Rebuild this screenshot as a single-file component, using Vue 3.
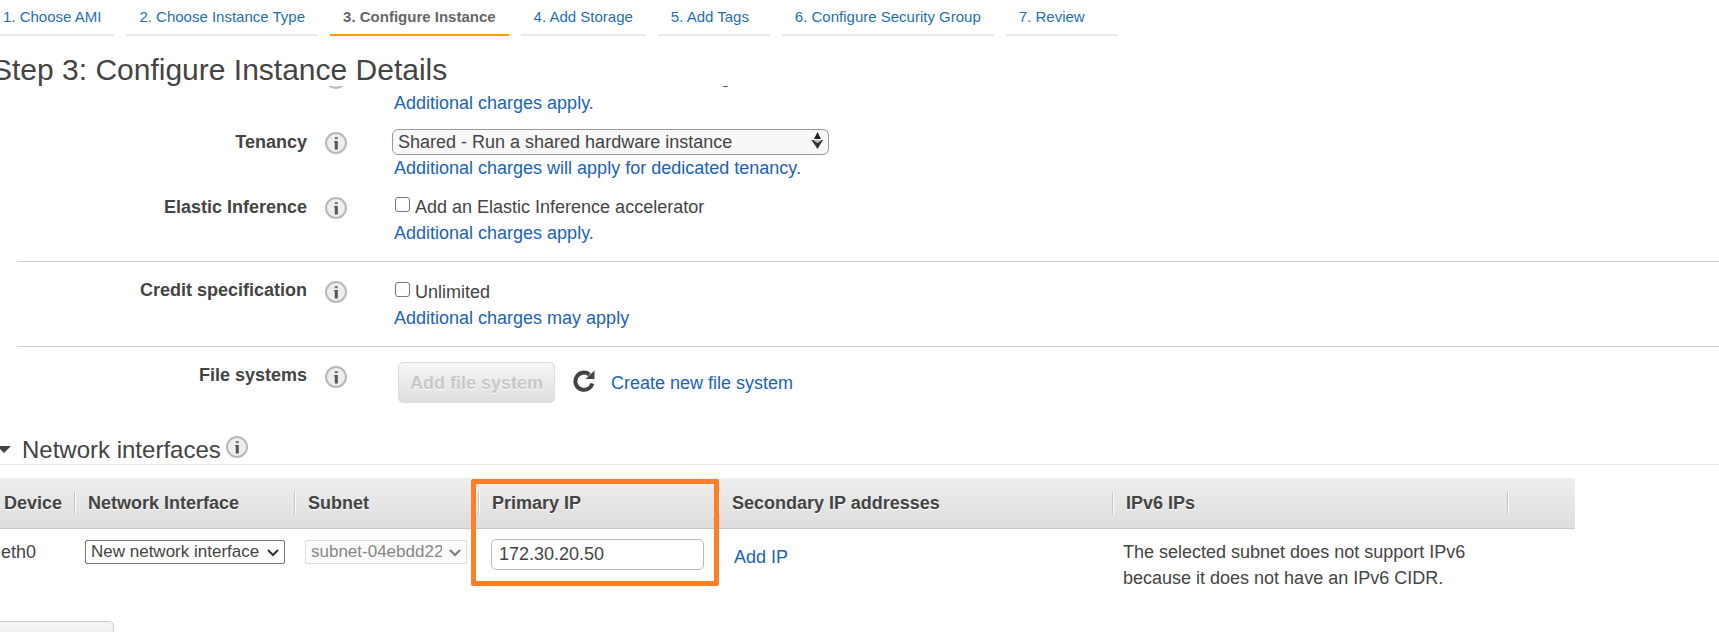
<script setup>
import { ref, h } from 'vue'

const steps = [
  '1. Choose AMI',
  '2. Choose Instance Type',
  '3. Configure Instance',
  '4. Add Storage',
  '5. Add Tags',
  '6. Configure Security Group',
  '7. Review'
]
const current = 2

const monitoring = ref(false)
const elastic = ref(false)
const unlimited = ref(false)
const primaryIp = ref('172.30.20.50')

const InfoIcon = () =>
  h('svg', { width: 22, height: 22, viewBox: '0 0 22 22', 'aria-hidden': 'true' }, [
    h('circle', { cx: 11, cy: 11, r: 10, fill: '#eeeeee', stroke: '#b8b8b8', 'stroke-width': 2 }),
    h('rect', { x: 9.8, y: 5, width: 3, height: 2.2, fill: '#777' }),
    h('path', { d: 'M9.200 9h3.600v8.500H9.800v-7H9.200z', fill: '#555' })
  ])
</script>

<template>
  <div class="page">
    <nav class="steps" aria-label="Launch steps">
      <a
        v-for="(step, i) in steps"
        :key="step"
        href="#"
        class="step"
        :class="{ active: i === current }"
      >{{ step }}</a>
    </nav>
    <h1 class="title">Step 3: Configure Instance Details</h1>

    <div class="details">
      <section class="group first">
        <div class="row">
          <span class="label"></span>
          <InfoIcon class="info" />
          <div class="field">
            <div class="check">
              <input id="monitoring" v-model="monitoring" type="checkbox">
              <label for="monitoring">Enable CloudWatch detailed monitoring</label>
            </div>
            <a href="#">Additional charges apply.</a>
          </div>
        </div>
        <div class="row">
          <label class="label" for="tenancy">Tenancy</label>
          <InfoIcon class="info" />
          <div class="field">
            <div class="picker tenancy">
              <select id="tenancy">
                <option>Shared - Run a shared hardware instance</option>
              </select>
              <svg width="12" height="18" viewBox="0 0 12 18" aria-hidden="true">
                <path d="M6.500 0L10 7H3z" fill="#222" />
                <path d="M0.500 8h2l4 3L10.500 8h1.500L6.500 17z" fill="#333" />
                <path d="M3 8h7L6.500 11z" fill="#bbb" />
              </svg>
            </div>
            <a href="#">Additional charges will apply for dedicated tenancy.</a>
          </div>
        </div>
        <div class="row">
          <label class="label" for="elastic">Elastic Inference</label>
          <InfoIcon class="info" />
          <div class="field">
            <div class="check">
              <input id="elastic" v-model="elastic" type="checkbox">
              <label for="elastic">Add an Elastic Inference accelerator</label>
            </div>
            <a href="#">Additional charges apply.</a>
          </div>
        </div>
      </section>

      <section class="group">
        <div class="row">
          <label class="label" for="unlimited">Credit specification</label>
          <InfoIcon class="info" />
          <div class="field lowered">
            <div class="check">
              <input id="unlimited" v-model="unlimited" type="checkbox">
              <label for="unlimited">Unlimited</label>
            </div>
            <a href="#">Additional charges may apply</a>
          </div>
        </div>
      </section>

      <section class="group last">
        <div class="row">
          <span class="label">File systems</span>
          <InfoIcon class="info" />
          <div class="field files">
            <button type="button" class="button" disabled>Add file system</button>
            <button type="button" class="refresh" aria-label="Refresh">
              <svg width="22" height="22" viewBox="0 0 22 22" aria-hidden="true">
                <path d="M16.500 4.600A8.600 8.600 0 1 0 19.300 13.500" fill="none" stroke="#444" stroke-width="4" />
                <path d="M21.500 0.500V9H12.500z" fill="#444" />
              </svg>
            </button>
            <a href="#">Create new file system</a>
          </div>
        </div>
      </section>
    </div>

    <h2 class="heading">
      <svg class="caret" width="14" height="7" viewBox="0 0 14 7" aria-hidden="true">
        <path d="M0 0h14L7 7z" fill="#444" />
      </svg>
      <span>Network interfaces</span>
      <InfoIcon />
    </h2>

    <table class="interfaces">
      <colgroup>
        <col class="c-device">
        <col class="c-interface">
        <col class="c-subnet">
        <col class="c-primary">
        <col>
        <col class="c-ipv6">
        <col class="c-end">
      </colgroup>
      <thead>
        <tr>
          <th>Device</th>
          <th>Network Interface</th>
          <th>Subnet</th>
          <th class="marked">Primary IP<span class="highlight"></span></th>
          <th>Secondary IP addresses</th>
          <th>IPv6 IPs</th>
          <th></th>
        </tr>
      </thead>
      <tbody>
        <tr>
          <td class="device">eth0</td>
          <td class="interface">
            <div class="picker small">
              <select aria-label="Network interface">
                <option>New network interface</option>
              </select>
              <svg width="12" height="8" viewBox="0 0 12 8" aria-hidden="true">
                <path d="M1 1l5 5 5-5" fill="none" stroke="#333" stroke-width="2" />
              </svg>
            </div>
          </td>
          <td class="subnet">
            <div class="picker small off">
              <select aria-label="Subnet" disabled>
                <option>subnet-04ebdd22</option>
              </select>
              <svg width="12" height="8" viewBox="0 0 12 8" aria-hidden="true">
                <path d="M1 1l5 5 5-5" fill="none" stroke="#777" stroke-width="2" />
              </svg>
            </div>
          </td>
          <td class="primary"><input v-model="primaryIp" type="text" aria-label="Primary IP"></td>
          <td class="secondary"><a href="#">Add IP</a></td>
          <td class="ipv6">The selected subnet does not support IPv6 because it does not have an IPv6 CIDR.</td>
          <td></td>
        </tr>
      </tbody>
    </table>

    <button type="button" class="button add-device">Add Device</button>
  </div>
</template>

<style>
html,
body {
  margin: 0;
  background: #fff;
}
</style>

<style scoped>
.page {
  height: 100vh;
  overflow: hidden;
  color: #444;
  font-family: "Liberation Sans", Arial, Helvetica, sans-serif;
  font-size: 18px;
  line-height: 26px;
}
a {
  color: #1a62bd;
  text-decoration: none;
}
.steps {
  display: flex;
  gap: 12px;
  margin-left: -10px;
}
.step {
  box-sizing: border-box;
  min-width: 112px;
  padding: 4px 13px 4px;
  border-bottom: 2px solid #eaeaea;
  color: #1f6fb2;
  font-size: 15px;
  white-space: nowrap;
}
.step.active {
  border-bottom-color: #f90;
  color: #666;
  font-weight: bold;
}
.title {
  margin: 18px 0 0 -8px;
  font-size: 30px;
  font-weight: normal;
  line-height: 32px;
}
.details {
  margin-left: 17px;
  overflow: hidden;
}
.group {
  display: flex;
  flex-direction: column;
  gap: 13px;
  padding: 15px 0;
  border-bottom: 1px solid #ccc;
}
.group.first {
  margin-top: -22px;
  padding-top: 0;
}
.group.last {
  padding-bottom: 0;
  border-bottom: 0;
}
.row {
  display: grid;
  grid-template-columns: 290px 22px 1fr;
  column-gap: 18px;
  align-items: start;
}
.label {
  font-weight: bold;
  text-align: right;
}
.info {
  display: block;
  margin-top: 3px;
}
.group + .group .info {
  margin-top: 4px;
}
.field {
  display: flex;
  flex-direction: column;
  align-items: flex-start;
  padding-left: 29px;
}
.field.lowered {
  padding-top: 2px;
}
.check {
  display: flex;
  gap: 5px;
}
.check input {
  appearance: none;
  box-sizing: border-box;
  width: 15px;
  height: 15px;
  margin: 3px 0 0 1px;
  border: 1px solid #767676;
  border-radius: 3px;
  background: #fff;
}
.picker {
  position: relative;
}
.picker select {
  appearance: none;
  display: block;
  box-sizing: border-box;
  width: 100%;
  height: 26px;
  margin: 0;
  border: 1px solid #999;
  border-radius: 6px;
  background: #f8f8f8;
  color: #444;
  font: inherit;
  line-height: 22px;
  padding: 0 24px 0 5px;
}
.picker svg {
  position: absolute;
  right: 6px;
  top: 3px;
  pointer-events: none;
}
.tenancy {
  width: 437px;
  margin-left: -2px;
}
.picker.small select {
  height: 24px;
  border-color: #767676;
  border-radius: 2px;
  background: #fff;
  font-size: 17px;
}
.picker.small svg {
  top: 9px;
}
.picker.small.off select {
  border-color: #ddd;
  background: #fafafa;
  color: #888;
  opacity: 1;
}
.field.files {
  flex-direction: row;
  align-items: center;
  padding-left: 33px;
}
.button {
  box-sizing: border-box;
  height: 41px;
  padding: 0 11px;
  border: 1px solid #ccc;
  border-radius: 5px;
  background: linear-gradient(#f6f6f6, #dedede);
  color: #444;
  font: inherit;
  font-weight: bold;
  white-space: nowrap;
}
.button:disabled {
  border-color: #ddd;
  color: #c8c8c8;
  text-shadow: 0 1px 0 #fff;
}
.refresh {
  display: block;
  height: 22px;
  margin: 0 16px 4px 18px;
  padding: 0;
  border: 0;
  background: none;
}
.refresh svg {
  display: block;
}
.heading {
  display: flex;
  margin: 33px 0 13px;
  border-bottom: 1px solid #eaeaea;
  font-size: 24px;
  font-weight: normal;
  line-height: 28px;
}
.caret {
  margin: 10px 11px 0 -3px;
}
.heading span {
  margin-right: 5px;
}
.interfaces {
  width: calc(100% - 144px);
  table-layout: fixed;
  border-collapse: separate;
  border-spacing: 0;
}
.c-device {
  width: 74px;
}
.c-interface {
  width: 220px;
}
.c-subnet {
  width: 184px;
}
.c-primary {
  width: 240px;
}
.c-ipv6 {
  width: 395px;
}
.c-end {
  width: 68px;
}
.interfaces thead tr {
  background: linear-gradient(#eee, #ddd);
}
.interfaces th {
  height: 50px;
  padding: 0 0 0 14px;
  border-bottom: 1px solid #c8c8c8;
  background:
    linear-gradient(#c4c4c4, #c4c4c4) 0 14px / 1px 22px no-repeat,
    linear-gradient(#fff, #fff) 1px 14px / 1px 22px no-repeat;
  text-align: left;
  text-shadow: 0 1px 0 #fff;
  white-space: nowrap;
}
.interfaces th:first-child {
  padding-left: 4px;
  background: none;
}
.marked {
  position: relative;
}
.highlight {
  position: absolute;
  box-sizing: border-box;
  left: -7px;
  top: 1px;
  width: 248px;
  height: 107px;
  border: 5px solid #ff7f27;
  border-radius: 2px;
  pointer-events: none;
}
.interfaces td {
  padding: 10px 0 0;
  vertical-align: top;
}
.interfaces .device {
  padding-left: 1px;
}
.interfaces .interface {
  padding: 11px 9px 0 11px;
}
.interfaces .subnet {
  padding: 11px 11px 0 11px;
}
.interfaces .primary {
  padding-left: 13px;
}
.primary input {
  box-sizing: border-box;
  display: block;
  width: 213px;
  height: 31px;
  padding: 0 7px;
  border: 1px solid #bbb;
  border-radius: 5px;
  background: #fff;
  color: #444;
  font: inherit;
}
.interfaces .secondary {
  padding: 15px 0 0 16px;
}
.interfaces .ipv6 {
  padding-left: 11px;
  padding-right: 40px;
}
.add-device {
  display: block;
  margin: 30px 0 0 -8px;
}
</style>
